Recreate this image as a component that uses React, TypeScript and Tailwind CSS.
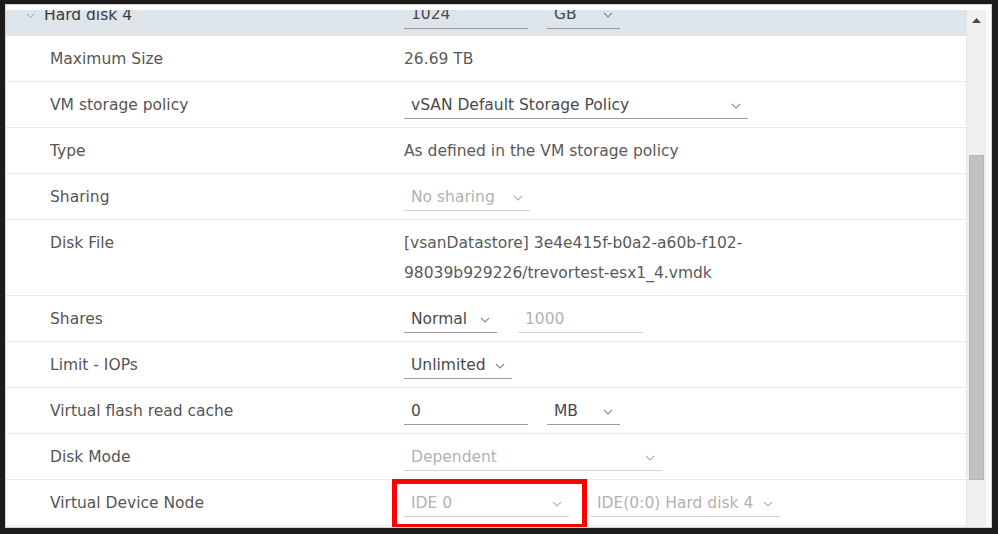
import React from "react";

const font = { fontFamily: '"DejaVu Sans", "Liberation Sans", sans-serif' };

function Chevron({ light }: { light?: boolean }) {
  return (
    <svg width="10" height="6" viewBox="0 0 10 6" className="shrink-0">
      <polyline
        points="1,1 5,5 9,1"
        fill="none"
        stroke={light ? "#b5b5b5" : "#8a8a8a"}
        strokeWidth="1.1"
      />
    </svg>
  );
}

interface SelectProps {
  value: string;
  width: string;
  disabled?: boolean;
}

function Select({ value, width, disabled }: SelectProps) {
  return (
    <div
      className={`flex items-center h-[26px] border-b pl-[7px] pr-[7px] ${width} ${
        disabled ? "border-[#d4d4d4] text-[#b2b2b2]" : "border-[#9c9c9c] text-[#4a4a4a]"
      }`}
    >
      <span className="flex-1 truncate">{value}</span>
      <Chevron light={disabled} />
    </div>
  );
}

function Input({ value, width, disabled }: SelectProps) {
  return (
    <div
      className={`flex items-center h-[26px] border-b pl-[7px] ${width} ${
        disabled ? "border-[#d4d4d4] text-[#b2b2b2]" : "border-[#9c9c9c] text-[#4a4a4a]"
      }`}
    >
      {value}
    </div>
  );
}

function Row({ label, children }: { label: string; children: React.ReactNode }) {
  return (
    <div className="flex items-center h-[46px] shrink-0 border-b border-[#ececec] pl-[44px] pt-[3px]">
      <div className="w-[354px] shrink-0 text-[#555555]">{label}</div>
      <div className="flex items-center">{children}</div>
    </div>
  );
}

export default function App() {
  return (
    <div
      className="w-[998px] h-[534px] bg-[#1c1c1c] pl-[5px] pt-[4px] pr-[6px] pb-[6px] text-[15.5px]"
      style={font}
    >
      <div className="w-full h-full bg-white border border-[#d2d2d2] flex flex-col overflow-hidden">
        {/* top strip */}
        <div className="h-[5px] shrink-0 bg-white" />

        <div className="flex flex-1 min-h-0">
          {/* Settings list */}
          <div className="w-[960px] flex flex-col overflow-hidden">
            {/* Hard disk header, partly scrolled out */}
            <div className="-mt-[10px] h-[36px] shrink-0 bg-[#dde5eb] flex items-center pb-[5px] pl-[20px]">
              <div className="w-[18px]">
                <svg width="9" height="5" viewBox="0 0 9 5">
                  <polyline points="0.5,0.5 4.5,4.5 8.5,0.5" fill="none" stroke="#9aa4ab" strokeWidth="1" />
                </svg>
              </div>
              <div className="w-[360px] text-[#3a3a3a]">Hard disk 4</div>
              <Input value="1024" width="w-[124px]" />
              <div className="w-[19px]" />
              <Select value="GB" width="w-[73px]" />
            </div>

            <Row label="Maximum Size">
              <span className="text-[#5a5a5a]">26.69 TB</span>
            </Row>
            <Row label="VM storage policy">
              <Select value="vSAN Default Storage Policy" width="w-[344px]" />
            </Row>
            <Row label="Type">
              <span className="text-[#5a5a5a]">As defined in the VM storage policy</span>
            </Row>
            <Row label="Sharing">
              <Select value="No sharing" width="w-[126px]" disabled />
            </Row>

            <div className="flex items-start h-[76px] shrink-0 border-b border-[#ececec] pl-[44px] pt-[8px] leading-[30px]">
              <div className="w-[354px] shrink-0 text-[#555555]">Disk File</div>
              <div className="text-[#5a5a5a]">
                <div>[vsanDatastore] 3e4e415f-b0a2-a60b-f102-</div>
                <div>98039b929226/trevortest-esx1_4.vmdk</div>
              </div>
            </div>

            <Row label="Shares">
              <Select value="Normal" width="w-[93px]" />
              <div className="w-[21px]" />
              <Input value="1000" width="w-[125px]" disabled />
            </Row>
            <Row label="Limit - IOPs">
              <Select value="Unlimited" width="w-[108px]" />
            </Row>
            <Row label="Virtual flash read cache">
              <Input value="0" width="w-[124px]" />
              <div className="w-[19px]" />
              <Select value="MB" width="w-[73px]" />
            </Row>
            <Row label="Disk Mode">
              <Select value="Dependent" width="w-[258px]" disabled />
            </Row>
            <Row label="Virtual Device Node">
              <div className="relative">
                <Select value="IDE 0" width="w-[165px]" disabled />
                {/* red highlight annotation */}
                <div className="absolute -left-[12px] -right-[18px] -top-[12px] -bottom-[12px] border-[5px] border-[#ff0000]" />
              </div>
              <div className="w-[21px]" />
              <Select value="IDE(0:0) Hard disk 4" width="w-[190px]" disabled />
            </Row>
          </div>

          {/* Scrollbar */}
          <div className="w-[20px] bg-[#f0f0f0] border-l border-[#e4e4e4] flex flex-col items-center">
            <div className="h-[20px] flex items-center justify-center">
              <svg width="9" height="5" viewBox="0 0 9 5">
                <polygon points="0,5 4.5,0 9,5" fill="#4a4a4a" />
              </svg>
            </div>
            <div className="mt-[125px] w-[15px] h-[325px] bg-[#c1c1c1] border border-[#b6b6b6]" />
          </div>
          <div className="w-[5px] bg-[#fafafa]" />
        </div>
      </div>
    </div>
  );
}
